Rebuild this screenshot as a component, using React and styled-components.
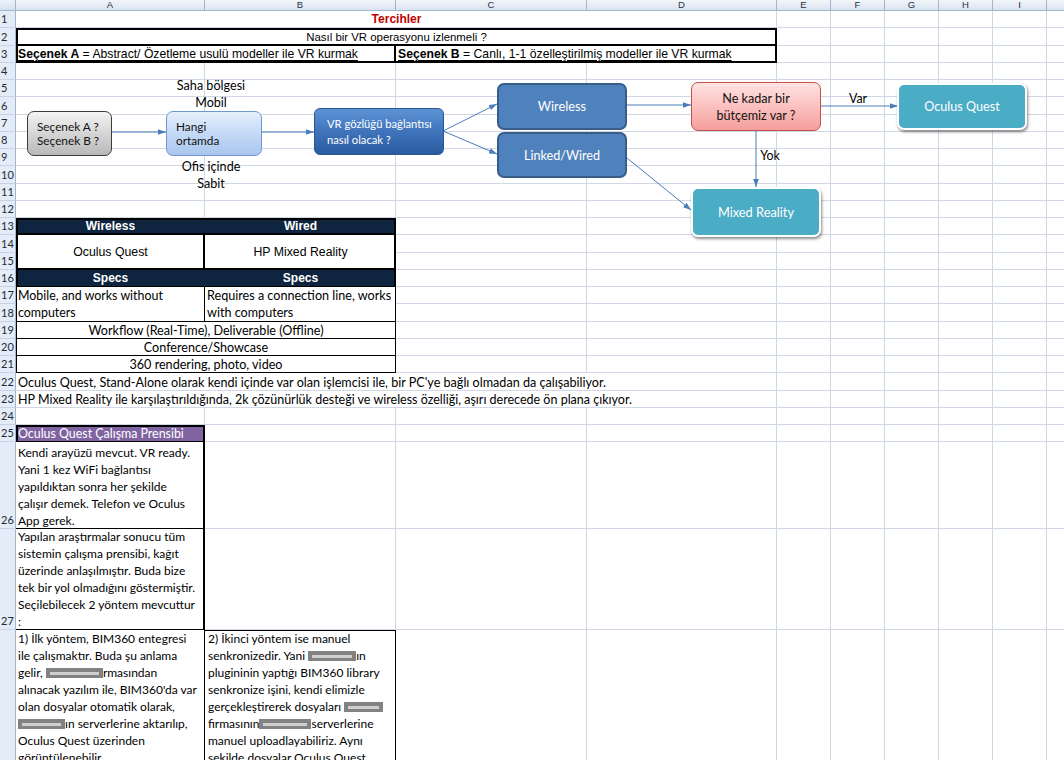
import React from 'react';
import styled, { createGlobalStyle, css } from 'styled-components';

const GlobalStyle = createGlobalStyle`
  html, body { margin: 0; padding: 0; background: #fff; overflow: hidden; }
  #root { width: 1064px; height: 760px; overflow: hidden; }
`;

const COLS = [16, 189, 191, 191, 190, 54, 54, 54, 54, 54, 80];
const LETTERS = ['', 'A', 'B', 'C', 'D', 'E', 'F', 'G', 'H', 'I', ''];
const ROW_H = Array.from({ length: 28 }, (_, i) => (i === 25 ? 87 : i === 26 ? 101 : i === 27 ? 160 : 17.25));

const ARIAL = '"Liberation Sans", Arial, sans-serif';
const CALIBRI = '"Lato", "Open Sans", sans-serif';

const Sheet = styled.div`
  position: relative;
  display: grid;
  grid-template-columns: ${COLS.map((c) => c + 'px').join(' ')};
  grid-template-rows: 11px ${ROW_H.map((h) => h + 'px').join(' ')};
  width: 1064px;
  height: 760px;
  overflow: hidden;
  font-family: ${CALIBRI};
  color: #000;
`;

const Corner = styled.div`
  grid-column: 1;
  grid-row: 1;
  background: linear-gradient(#eef3fa, #d6e0ef);
  border-right: 1px solid #9eb6ce;
  border-bottom: 1px solid #9eb6ce;
  box-sizing: border-box;
`;

const ColHead = styled.div`
  grid-row: 1;
  grid-column: ${(p) => p.$col};
  background: linear-gradient(#f2f6fb, #dbe4f1);
  border-right: 1px solid #9eb6ce;
  border-bottom: 1px solid #9eb6ce;
  box-sizing: border-box;
  font-family: ${ARIAL};
  font-size: 9.5px;
  line-height: 10px;
  color: #27313f;
  text-align: center;
  overflow: hidden;
`;

const RowHead = styled.div`
  grid-column: 1;
  grid-row: ${(p) => p.$row + 1};
  background: #e4ecf7;
  border-right: 1px solid #9eb6ce;
  border-bottom: 1px solid #c5d3e6;
  box-sizing: border-box;
  display: flex;
  align-items: flex-end;
  padding-left: 1px;
  font-family: ${CALIBRI};
  font-size: 11px;
  line-height: 16px;
  color: #1f2a38;
  overflow: hidden;
`;

const shadow = ({ $t, $r = 'g', $b = 'g', $l }) => {
  const black = [];
  const grid = [];
  const side = (v, fn) => {
    if (v == null || v === 0) return;
    if (v === 'g') grid.push(fn(1, '#d0d7e5'));
    else black.push(fn(v, '#000'));
  };
  side($t, (w, c) => `inset 0 ${w}px 0 ${c}`);
  side($l, (w, c) => `inset ${w}px 0 0 ${c}`);
  side($r, (w, c) => `inset -${w}px 0 0 ${c}`);
  side($b, (w, c) => `inset 0 -${w}px 0 ${c}`);
  const all = [...black, ...grid];
  return all.length ? all.join(', ') : 'none';
};

const Cell = styled.div`
  grid-column: ${(p) => `${p.$col + 1} / span ${p.$cs || 1}`};
  grid-row: ${(p) => `${p.$row + 1} / span ${p.$rs || 1}`};
  box-shadow: ${shadow};
  background: ${(p) => p.$bg || 'transparent'};
  display: flex;
  flex-direction: column;
  justify-content: ${(p) => (p.$v === 'top' ? 'flex-start' : p.$v === 'center' ? 'center' : 'flex-end')};
  align-items: ${(p) => (p.$align === 'center' ? 'center' : 'flex-start')};
  padding: ${(p) => (p.$pad != null ? p.$pad : '0 2px 0 2px')};
  box-sizing: border-box;
  overflow: ${(p) => (p.$spill ? 'visible' : 'hidden')};
  font-family: ${(p) => (p.$arial ? ARIAL : CALIBRI)};
  font-size: ${(p) => p.$fs || (p.$arial ? 12 : 12.6)}px;
  line-height: 17px;
  color: ${(p) => p.$color || '#000'};
  font-weight: ${(p) => (p.$bold ? 700 : 400)};
  white-space: nowrap;
`;

const Line = styled.div`
  white-space: nowrap;
  line-height: 17px;
`;

const Under = styled.span`
  text-decoration: underline;
  text-underline-offset: 2px;
`;

const Redact = styled.span`
  display: inline-block;
  vertical-align: -1px;
  width: ${(p) => p.$w}px;
  height: 10px;
  background-color: #828282;
  background-image: linear-gradient(#cfcfcf, #cfcfcf);
  background-size: calc(100% - 8px) 3px;
  background-position: center;
  background-repeat: no-repeat;
`;

/* ---------- drawing layer ---------- */

const Drawing = styled.div`
  position: absolute;
  left: 0;
  top: 0;
  width: 1064px;
  height: 260px;
  pointer-events: none;
`;

const Connectors = styled.svg`
  position: absolute;
  left: 0;
  top: 0;
  width: 1064px;
  height: 260px;
  overflow: visible;
`;

const variants = {
  gray: css`
    background: linear-gradient(#f4f4f4, #d2d2d2 55%, #b9b9b9);
    border: 1px solid #3c3c3c;
    color: #111;
    border-radius: 7px;
  `,
  light: css`
    background: linear-gradient(#e6f0fc, #c4d9f5 50%, #a9c6ef);
    border: 1px solid #7096cf;
    color: #111;
    border-radius: 7px;
  `,
  dark: css`
    background: linear-gradient(#5d93d6, #3f74bb 50%, #2a5b9f);
    border: 1px solid #2b5693;
    color: #fff;
    border-radius: 6px;
  `,
  blue: css`
    background: #4f81bd;
    border: 2px solid #385d8a;
    color: #fff;
    border-radius: 7px;
  `,
  pink: css`
    background: linear-gradient(#ffe3e2, #fbc1bf 50%, #f49e9b);
    border: 1px solid #c0504d;
    color: #111;
    border-radius: 7px;
  `,
  teal: css`
    background: #4bacc6;
    border: 2px solid #fff;
    color: #fff;
    border-radius: 7px;
    box-shadow: 1px 2px 3px rgba(0, 0, 0, 0.45);
  `,
};

const Shape = styled.div`
  position: absolute;
  left: ${(p) => p.$x}px;
  top: ${(p) => p.$y}px;
  width: ${(p) => p.$w}px;
  height: ${(p) => p.$h}px;
  box-sizing: border-box;
  display: flex;
  flex-direction: column;
  justify-content: center;
  align-items: ${(p) => (p.$left ? 'flex-start' : 'center')};
  padding-left: ${(p) => p.$pl || 0}px;
  font-family: ${CALIBRI};
  font-size: ${(p) => p.$fs || 12}px;
  line-height: ${(p) => p.$lh || 17}px;
  white-space: nowrap;
  ${(p) => variants[p.$variant]}
`;

const Label = styled.div`
  position: absolute;
  left: ${(p) => p.$x}px;
  top: ${(p) => p.$y}px;
  width: ${(p) => p.$w || 100}px;
  text-align: center;
  font-family: ${CALIBRI};
  font-size: ${(p) => p.$fs || 12.4}px;
  line-height: 17px;
  color: #000;
  white-space: nowrap;
`;

const arrows = [
  [111, 132, 166, 132],
  [261, 132, 314, 132],
  [443, 131, 497, 104],
  [443, 131, 497, 154],
  [627, 105, 691, 105],
  [821, 106, 898, 106],
  [756, 131, 756, 187],
  [627, 158, 691, 210],
];

const WRAP = 12;

const cellDefs = [
  { c: 1, r: 1, cs: 4, align: 'center', arial: true, bold: true, color: '#c00000', content: 'Tercihler' },
  { c: 1, r: 2, cs: 4, align: 'center', arial: true, fs: 11.4, t: 2, l: 2, r2: 2, b: 2, content: 'Nasıl bir VR operasyonu izlenmeli ?' },
  {
    c: 1, r: 3, cs: 2, arial: true, fs: 12.2, l: 2, r2: 2, b: 2,
    content: (
      <Under>
        <b>Seçenek A</b> = Abstract/ Özetleme usulü modeller ile VR kurmak
      </Under>
    ),
  },
  {
    c: 3, r: 3, cs: 2, arial: true, fs: 12.2, r2: 2, b: 2,
    content: (
      <Under>
        <b>Seçenek B</b> = Canlı, 1-1 özelleştirilmiş modeller ile VR kurmak
      </Under>
    ),
  },
  { c: 1, r: 13, arial: true, bold: true, align: 'center', bg: '#0f243e', color: '#fff', t: 2, l: 2, r2: 0, b: 2, content: 'Wireless' },
  { c: 2, r: 13, arial: true, bold: true, align: 'center', bg: '#0f243e', color: '#fff', t: 2, r2: 2, b: 2, content: 'Wired' },
  { c: 1, r: 14, rs: 2, arial: true, fs: 12.3, align: 'center', v: 'center', l: 2, r2: 2, b: 2, content: 'Oculus Quest' },
  { c: 2, r: 14, rs: 2, arial: true, fs: 12.3, align: 'center', v: 'center', r2: 2, b: 2, content: 'HP Mixed Reality' },
  { c: 1, r: 16, arial: true, bold: true, align: 'center', bg: '#0f243e', color: '#fff', l: 2, r2: 0, b: 1, content: 'Specs' },
  { c: 2, r: 16, arial: true, bold: true, align: 'center', bg: '#0f243e', color: '#fff', r2: 2, b: 1, content: 'Specs' },
  {
    c: 1, r: 17, rs: 2, v: 'top', l: 1, r2: 1, b: 1, fs: 12.4,
    content: [<Line key="a">Mobile, and works without</Line>, <Line key="b">computers</Line>],
  },
  {
    c: 2, r: 17, rs: 2, v: 'top', r2: 1, b: 1,
    content: [<Line key="a">Requires a connection line, works</Line>, <Line key="b">with computers</Line>],
  },
  { c: 1, r: 19, cs: 2, align: 'center', l: 1, r2: 1, b: 1, content: 'Workflow (Real-Time), Deliverable (Offline)' },
  { c: 1, r: 20, cs: 2, align: 'center', l: 1, r2: 1, b: 1, content: 'Conference/Showcase' },
  { c: 1, r: 21, cs: 2, align: 'center', l: 1, r2: 1, b: 1, content: '360 rendering, photo, video' },
  { c: 1, r: 22, cs: 4, content: "Oculus Quest, Stand-Alone olarak kendi içinde var olan işlemcisi ile, bir PC'ye bağlı olmadan da çalışabiliyor." },
  { c: 1, r: 23, cs: 4, fs: 12.5, content: 'HP Mixed Reality ile karşılaştırıldığında, 2k çözünürlük desteği ve wireless özelliği, aşırı derecede ön plana çıkıyor.' },
  { c: 1, r: 25, bg: '#8064a2', color: '#fff', fs: 12.4, t: 2, l: 2, r2: 2, b: 1, content: 'Oculus Quest Çalışma Prensibi' },
  {
    c: 1, r: 26, r2: 2, b: 1, fs: WRAP, spill: true,
    content: [
      'Kendi arayüzü mevcut. VR ready.',
      'Yani 1 kez WiFi bağlantısı',
      'yapıldıktan sonra her şekilde',
      'çalışır demek. Telefon ve Oculus',
      'App gerek.',
    ].map((t) => <Line key={t}>{t}</Line>),
  },
  {
    c: 1, r: 27, r2: 2, b: 1, fs: WRAP, spill: true,
    content: [
      'Yapılan araştırmalar sonucu tüm',
      'sistemin çalışma prensibi, kağıt',
      'üzerinde anlaşılmıştır. Buda bize',
      'tek bir yol olmadığını göstermiştir.',
      'Seçilebilecek 2 yöntem mevcuttur',
      ':',
    ].map((t) => <Line key={t}>{t}</Line>),
  },
  {
    c: 1, r: 28, v: 'top', r2: 1, b: 0, pad: '0 2px', fs: WRAP, spill: true,
    content: [
      <Line key="1">1) İlk yöntem, BIM360 entegresi</Line>,
      <Line key="2">ile çalışmaktır. Buda şu anlama</Line>,
      <Line key="3">gelir, <Redact $w={57} />rmasından</Line>,
      <Line key="4">alınacak yazılım ile, BIM360'da var</Line>,
      <Line key="5">olan dosyalar otomatik olarak,</Line>,
      <Line key="6"><Redact $w={47} />ın serverlerine aktarılıp,</Line>,
      <Line key="7">Oculus Quest üzerinden</Line>,
      <Line key="8">görüntülenebilir.</Line>,
    ],
  },
  {
    c: 2, r: 28, v: 'top', t: 1, r2: 1, b: 0, pad: '0 2px 0 3px', fs: WRAP, spill: true,
    content: [
      <Line key="1">2) İkinci yöntem ise manuel</Line>,
      <Line key="2">senkronizedir. Yani <Redact $w={48} />ın</Line>,
      <Line key="3">plugininin yaptığı BIM360 library</Line>,
      <Line key="4">senkronize işini, kendi elimizle</Line>,
      <Line key="5">gerçekleştirerek dosyaları <Redact $w={39} /></Line>,
      <Line key="6">firmasının<Redact $w={52} />serverlerine</Line>,
      <Line key="7">manuel uploadlayabiliriz. Aynı</Line>,
      <Line key="8">şekilde dosyalar Oculus Quest</Line>,
    ],
  },
];

function buildCells() {
  const occ = {};
  const out = [];
  cellDefs.forEach((d, i) => {
    const cs = d.cs || 1;
    const rs = d.rs || 1;
    for (let r = d.r; r < d.r + rs; r++) for (let c = d.c; c < d.c + cs; c++) occ[`${r}-${c}`] = true;
    out.push(
      <Cell
        key={`d${i}`}
        $col={d.c}
        $row={d.r}
        $cs={cs}
        $rs={rs}
        $t={d.t}
        $l={d.l}
        $r={d.r2 === undefined ? 'g' : d.r2}
        $b={d.b === undefined ? 'g' : d.b}
        $bg={d.bg}
        $align={d.align}
        $v={d.v}
        $arial={d.arial}
        $bold={d.bold}
        $color={d.color}
        $pad={d.pad}
        $fs={d.fs}
        $spill={d.spill}
      >
        {typeof d.content === 'string' ? <Line>{d.content}</Line> : d.content}
      </Cell>
    );
  });
  for (let r = 1; r <= 28; r++) {
    for (let c = 1; c <= 10; c++) {
      if (!occ[`${r}-${c}`]) out.push(<Cell key={`e${r}-${c}`} $col={c} $row={r} />);
    }
  }
  return out;
}

export default function App() {
  return (
    <>
      <GlobalStyle />
      <Sheet>
        <Corner />
        {LETTERS.slice(1).map((l, i) => (
          <ColHead key={i} $col={i + 2}>
            {l}
          </ColHead>
        ))}
        {ROW_H.map((_, i) => (
          <RowHead key={i} $row={i + 1}>
            {i + 1}
          </RowHead>
        ))}
        {buildCells()}

        <Drawing>
          <Connectors viewBox="0 0 1064 260">
            <defs>
              <marker id="ah" viewBox="0 0 10 10" refX="10" refY="5" markerWidth="8" markerHeight="8" orient="auto">
                <path d="M0,1.5 L10,5 L0,8.5 z" fill="#4a7ebb" />
              </marker>
            </defs>
            {arrows.map(([x1, y1, x2, y2], i) => (
              <line key={i} x1={x1} y1={y1} x2={x2} y2={y2} stroke="#4a7ebb" strokeWidth="1" markerEnd="url(#ah)" />
            ))}
          </Connectors>

          <Label $x={161} $y={77} $fs={12.6}>Saha bölgesi</Label>
          <Label $x={161} $y={94} $fs={12.6}>Mobil</Label>
          <Label $x={161} $y={158} $fs={12.6}>Ofis içinde</Label>
          <Label $x={161} $y={175} $fs={12.6}>Sabit</Label>
          <Label $x={838} $y={90} $w={40} $fs={12.4}>Var</Label>
          <Label $x={750} $y={147} $w={40} $fs={12.4}>Yok</Label>

          <Shape $variant="gray" $x={27} $y={111} $w={85} $h={45} $left $pl={9} $fs={11.8} $lh={14}>
            <div>Seçenek A ?</div>
            <div>Seçenek B ?</div>
          </Shape>
          <Shape $variant="light" $x={166} $y={111} $w={96} $h={45} $left $pl={9} $fs={11.8} $lh={14}>
            <div>Hangi</div>
            <div>ortamda</div>
          </Shape>
          <Shape $variant="dark" $x={314} $y={108} $w={130} $h={47} $left $pl={12} $fs={11.2} $lh={16}>
            <div>VR gözlüğü bağlantısı</div>
            <div>nasıl olacak ?</div>
          </Shape>
          <Shape $variant="blue" $x={497} $y={83} $w={130} $h={47} $fs={12.8}>
            Wireless
          </Shape>
          <Shape $variant="blue" $x={497} $y={132} $w={130} $h={46} $fs={12.6}>
            Linked/Wired
          </Shape>
          <Shape $variant="pink" $x={691} $y={82} $w={130} $h={49} $fs={12.6}>
            <div>Ne kadar bir</div>
            <div>bütçemiz var ?</div>
          </Shape>
          <Shape $variant="teal" $x={897} $y={83} $w={130} $h={47} $fs={12.6}>
            Oculus Quest
          </Shape>
          <Shape $variant="teal" $x={691} $y={187} $w={130} $h={50} $fs={12.8}>
            Mixed Reality
          </Shape>
        </Drawing>
      </Sheet>
    </>
  );
}
